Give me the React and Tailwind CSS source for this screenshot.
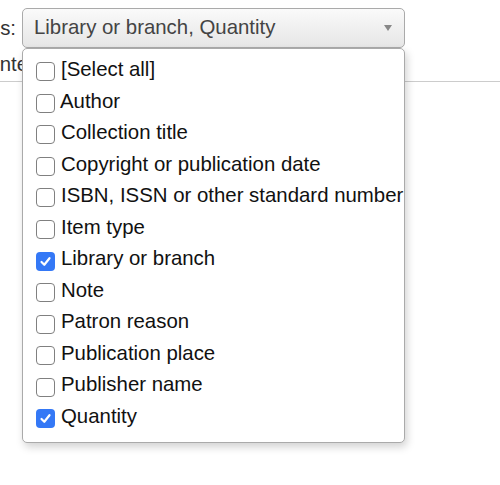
import React from "react";

const options = [
  { label: "[Select all]", checked: false },
  { label: "Author", checked: false, tight: true },
  { label: "Collection title", checked: false },
  { label: "Copyright or publication date", checked: false },
  { label: "ISBN, ISSN or other standard number", checked: false },
  { label: "Item type", checked: false },
  { label: "Library or branch", checked: true },
  { label: "Note", checked: false },
  { label: "Patron reason", checked: false },
  { label: "Publication place", checked: false },
  { label: "Publisher name", checked: false },
  { label: "Quantity", checked: true },
];

function Box({ checked }) {
  if (checked) {
    return (
      <span className="w-[19px] h-[19px] shrink-0 rounded-[4px] bg-[#3478f6] flex items-center justify-center">
        <svg width="13" height="13" viewBox="0 0 13 13" fill="none">
          <path d="M2.5 7 L5.3 9.8 L10.5 3.2" stroke="white" strokeWidth="2.2" strokeLinecap="round" strokeLinejoin="round" />
        </svg>
      </span>
    );
  }
  return <span className="w-[19px] h-[19px] shrink-0 rounded-[4px] border-[1.5px] border-[#808080] bg-white" />;
}

export default function App() {
  return (
    <div className="w-[500px] h-[485px] bg-white overflow-hidden text-[20.4px] text-[#222] font-['Liberation_Sans',Arial,sans-serif]">
      {/* Label + select */}
      <div className="flex items-center pt-[8px]">
        <div className="w-[22px] pr-[6px] flex justify-end overflow-hidden whitespace-nowrap text-[#333]">
          Columns:
        </div>
        <div className="relative">
          <div className="w-[383px] h-[40px] rounded-[5px] border border-[#aaa] bg-gradient-to-b from-[#fafafa] to-[#e6e6e6] flex items-center pl-[11px] pr-[12px] text-[#444]">
            <span className="flex-1 whitespace-nowrap -mt-[1px]">Library or branch, Quantity</span>
            <svg width="8" height="6" viewBox="0 0 8 6">
              <polygon points="0,0 8,0 4,6" fill="#888" />
            </svg>
          </div>

          {/* Dropdown menu */}
          <div className="absolute left-0 top-full z-10 w-[383px] bg-white border border-[#aaa] rounded-[5px] shadow-[2px_4px_8px_rgba(0,0,0,0.18)] pt-[7px] pb-[7px] overflow-hidden">
            {options.map((o) => (
              <div key={o.label} className="h-[31.56px] flex items-center pl-[13px] whitespace-nowrap">
                <Box checked={o.checked} />
                <span className={o.tight ? "ml-[5px] -mt-[5px] text-[#111]" : "ml-[6px] -mt-[5px] text-[#111]"}>{o.label}</span>
              </div>
            ))}
          </div>
        </div>
      </div>

      {/* Row behind the menu */}
      <div className="h-[34px] border-b border-[#ccc] flex items-start pt-[1px] overflow-hidden whitespace-nowrap">
        <span className="-ml-[6px] text-[#333]">Internal</span>
      </div>
    </div>
  );
}
